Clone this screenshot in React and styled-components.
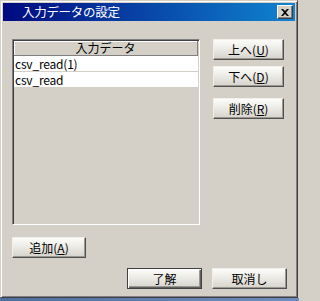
import React from 'react'
import styled, { createGlobalStyle } from 'styled-components'

const GlobalStyle = createGlobalStyle`
  html, body {
    margin: 0;
    padding: 0;
    background: #d4d0c8;
  }
  body {
    width: 299px;
    height: 301px;
    overflow: hidden;
    font-family: "Noto Sans CJK JP", "Liberation Sans", sans-serif;
    font-size: 12px;
  }
`

const Screen = styled.div`
  width: 299px;
  height: 301px;
  display: flex;
  flex-direction: column;
`

const Window = styled.div`
  width: 298px;
  height: 298px;
  box-sizing: border-box;
  background: #d4d0c8;
  border: 1px solid;
  border-color: #d4d0c8 #404040 #404040 #d4d0c8;
  box-shadow: inset 1px 1px #ffffff, inset -1px -1px #808080;
  padding: 2px;
  display: flex;
  flex-direction: column;
`

const TaskStrip = styled.div`
  flex: 1;
  background: linear-gradient(to right, #4f6ea4, #6f8cc0);
`

const TitleBar = styled.div`
  height: 18px;
  display: flex;
  align-items: center;
  justify-content: space-between;
  padding: 0 2px 0 19px;
  background: linear-gradient(to right, #000a80, #1084d0);
`

const TitleText = styled.span`
  color: #ffffff;
  font-size: 12.5px;
  line-height: 18px;
  letter-spacing: -0.3px;
`

const CloseButton = styled.div`
  width: 16px;
  height: 14px;
  box-sizing: border-box;
  background: #d4d0c8;
  border: 1px solid;
  border-color: #ffffff #404040 #404040 #ffffff;
  box-shadow: inset -1px -1px #808080;
  display: flex;
  align-items: center;
  justify-content: center;
`

const Body = styled.div`
  flex: 1;
  display: flex;
  flex-direction: column;
  padding: 18px 8px 6px 9px;
`

const TopRow = styled.div`
  display: flex;
  gap: 13px;
`

const ListBox = styled.div`
  width: 188px;
  height: 186px;
  box-sizing: border-box;
  border: 1px solid;
  border-color: #808080 #ffffff #ffffff #808080;
  box-shadow: inset 1px 1px #404040, inset -1px -1px #d4d0c8;
  padding: 1px;
  display: flex;
  flex-direction: column;
`

const ListHeader = styled.div`
  height: 15px;
  box-sizing: border-box;
  border-bottom: 1px solid #808080;
  border-right: 1px solid #808080;
  box-shadow: inset 1px 1px #ffffff;
  text-align: center;
  line-height: 14px;
  color: #000;
`

const ListRow = styled.div`
  height: 16px;
  box-sizing: border-box;
  background: #ffffff;
  border-bottom: 1px solid #d4d0c8;
  padding-left: 1px;
  line-height: 15px;
  color: #000;
  letter-spacing: -0.2px;
`

const ButtonColumn = styled.div`
  width: 71px;
  display: flex;
  flex-direction: column;
`

const Button = styled.div`
  width: ${p => p.$w || 71}px;
  height: 21px;
  margin-top: ${p => p.$mt || 0}px;
  box-sizing: border-box;
  border: 1px solid;
  border-color: ${p => (p.$default ? '#404040' : '#f0efea #505050 #505050 #f0efea')};
  box-shadow: ${p =>
    p.$default
      ? 'inset 1px 1px #ffffff, inset -1px -1px #606060, inset -2px -2px #9a9890'
      : 'inset -1px -1px #9a9890'};
  background: linear-gradient(to bottom, #fcfcfa 0%, #ecebe6 45%, #d6d3cb 100%);
  display: flex;
  align-items: center;
  justify-content: center;
  color: #000;
  line-height: 14px;
`

const Key = styled.span`
  text-decoration: underline;
`

const AddRow = styled.div`
  margin-top: 12px;
  display: flex;
`

const Footer = styled.div`
  margin-top: 10px;
  display: flex;
  justify-content: flex-end;
  gap: 10px;
`

const items = ['csv_read(1)', 'csv_read']

export default function App () {
  return (
    <Screen>
      <GlobalStyle />
      <Window>
        <TitleBar>
          <TitleText>入力データの設定</TitleText>
          <CloseButton>
            <svg width="8" height="7" viewBox="0 0 8 7">
              <path d="M0 0h2l2 2 2-2h2L5 3.5 8 7H6L4 5 2 7H0l3-3.5z" fill="#000" />
            </svg>
          </CloseButton>
        </TitleBar>
        <Body>
          <TopRow>
            <ListBox>
              <ListHeader>入力データ</ListHeader>
              {items.map(item => (
                <ListRow key={item}>{item}</ListRow>
              ))}
            </ListBox>
            <ButtonColumn>
              <Button>上へ(<Key>U</Key>)</Button>
              <Button $mt={6}>下へ(<Key>D</Key>)</Button>
              <Button $mt={11}>削除(<Key>R</Key>)</Button>
            </ButtonColumn>
          </TopRow>
          <AddRow>
            <Button $w={74}>追加(<Key>A</Key>)</Button>
          </AddRow>
          <Footer>
            <Button $w={75} $default>了解</Button>
            <Button $w={75}>取消し</Button>
          </Footer>
        </Body>
      </Window>
      <TaskStrip />
    </Screen>
  )
}
